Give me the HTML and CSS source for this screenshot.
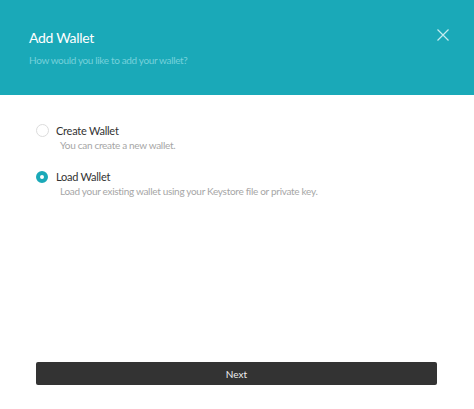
FILE: index.html
```html
<!DOCTYPE html>
<html lang="en">
<head>
  <meta charset="UTF-8">
  <meta name="viewport" content="width=device-width,initial-scale=1.0">
  <title>Add Wallet</title>
  <link rel="stylesheet" href="styles.css">
</head>
<body>
  <div class="modal">
    <div class="header">
      <div>
        <h1>Add Wallet</h1>
        <p>How would you like to add your wallet?</p>
      </div>
      <button class="close" aria-label="Close">
        <svg width="12" height="12" viewBox="0 0 12 12"><path d="M0.5 0.5 L11.5 11.5 M11.5 0.5 L0.5 11.5" stroke="#c4ecf0" stroke-width="1.2" fill="none"/></svg>
      </button>
    </div>
    <div class="body">
      <label class="option">
        <span class="radio"></span>
        <span class="text">
          <span class="title">Create Wallet</span>
          <span class="desc">You can create a new wallet.</span>
        </span>
      </label>
      <label class="option">
        <span class="radio checked"></span>
        <span class="text">
          <span class="title">Load Wallet</span>
          <span class="desc">Load your existing wallet using your Keystore file or private key.</span>
        </span>
      </label>
    </div>
    <div class="footer">
      <button class="next">Next</button>
    </div>
  </div>
</body>
</html>
```

FILE: styles.css
```css
body {
  margin: 0;
  font-family: Lato, "Open Sans", sans-serif;
  background: #fff;
  color: #222;
}
.modal {
  width: 474px;
  height: 409px;
  display: flex;
  flex-direction: column;
}
.header {
  background: #1aa9b8;
  height: 95px;
  box-sizing: border-box;
  padding: 29px 25px 0 29px;
  display: flex;
  justify-content: space-between;
  align-items: flex-start;
}
.header h1 {
  margin: 0;
  font-size: 14px;
  font-weight: 400;
  letter-spacing: -0.3px;
  color: #fff;
  line-height: 18px;
}
.header p {
  margin: 7px 0 0;
  font-size: 10px;
  letter-spacing: -0.35px;
  color: #76d1db;
  line-height: 12px;
}
.close {
  background: none;
  border: 0;
  padding: 0;
  cursor: pointer;
}
.body {
  flex: 1;
  padding: 29px 36px 0;
}
.option {
  display: flex;
  align-items: flex-start;
  margin-bottom: 18px;
}
.radio {
  width: 13px;
  height: 13px;
  box-sizing: border-box;
  border: 1px solid #dcdcdc;
  border-radius: 50%;
  margin: 0 7px 0 0;
  flex-shrink: 0;
}
.radio.checked {
  border: 4px solid #1aa9b8;
  width: 12px;
  height: 12px;
  margin-top: 1px;
  margin-right: 8px;
}
.text {
  display: flex;
  flex-direction: column;
}
.title {
  font-size: 11px;
  line-height: 14px;
  letter-spacing: -0.25px;
  color: #333;
}
.desc {
  font-size: 10px;
  line-height: 14px;
  letter-spacing: -0.3px;
  color: #a6a6a6;
  margin-left: 4px;
}
.footer {
  padding: 0 37px 24px 36px;
}
.next {
  width: 100%;
  height: 23px;
  background: #333;
  color: #eee;
  border: 0;
  border-radius: 2px;
  font-family: inherit;
  font-size: 10px;
  cursor: pointer;
}
```
